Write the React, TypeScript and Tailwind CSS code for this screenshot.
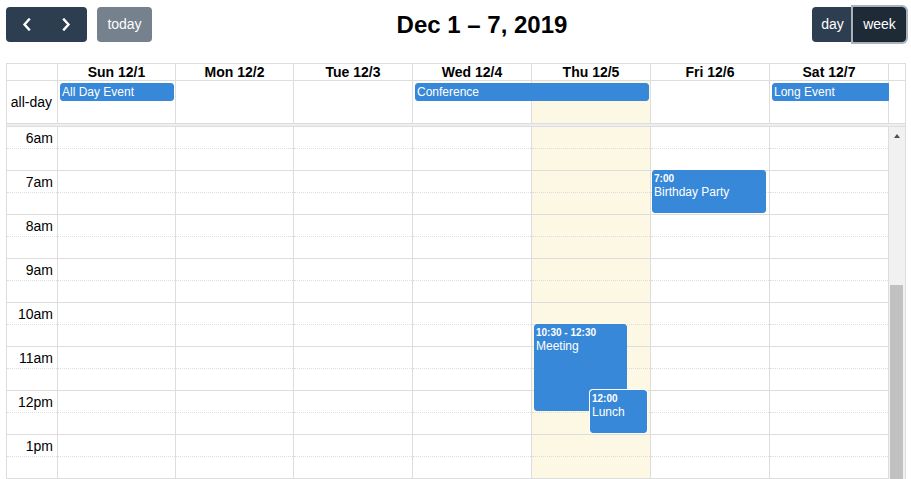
import React from 'react';

const days = ['Sun 12/1', 'Mon 12/2', 'Tue 12/3', 'Wed 12/4', 'Thu 12/5', 'Fri 12/6', 'Sat 12/7'];
const TODAY = 4;
const hours = ['6am', '7am', '8am', '9am', '10am', '11am', '12pm', '1pm'];
const colStart = ['col-start-2', 'col-start-3', 'col-start-4', 'col-start-5', 'col-start-6', 'col-start-7', 'col-start-8'];

const HOUR = 44;

const timed = [
  { day: 5, start: 7, end: 8, time: '7:00', title: 'Birthday Party', left: 1, right: 3, outline: false },
  { day: 4, start: 10.5, end: 12.5, time: '10:30 - 12:30', title: 'Meeting', left: 2, right: 23, outline: false },
  { day: 4, start: 12, end: 13, time: '12:00', title: 'Lunch', left: 58, right: 3, outline: true },
];

// axis | 7 days | scrollbar gutter
const grid = 'grid grid-cols-[51px_118px_118px_119px_119px_119px_119px_119px_17px]';

function Chevron({ dir }: { dir: 'left' | 'right' }) {
  return (
    <svg width="9" height="13" viewBox="0 0 9 13" fill="none">
      <path
        d={dir === 'left' ? 'M7 1.5L2.5 6.5L7 11.5' : 'M2 1.5L6.5 6.5L2 11.5'}
        stroke="white"
        strokeWidth="2.4"
        strokeLinecap="square"
      />
    </svg>
  );
}

function Toolbar() {
  return (
    <div className="flex items-center justify-between h-[35px] mb-[21px]">
      <div className="flex items-center">
        <div className="flex">
          <button className="w-[40px] h-[35px] flex items-center justify-center bg-[#2c3e50] rounded-l-[4px]">
            <Chevron dir="left" />
          </button>
          <button className="w-[41px] h-[35px] flex items-center justify-center bg-[#2c3e50] rounded-r-[4px]">
            <Chevron dir="right" />
          </button>
        </div>
        <button className="ml-[10px] h-[35px] w-[55px] rounded-[4px] bg-[#2c3e50] opacity-65 text-white text-[14px]">
          today
        </button>
      </div>
      <h2 className="text-[24px] font-bold leading-[35px] text-black">Dec 1 – 7, 2019</h2>
      <div className="flex">
        <button className="h-[35px] w-[41px] bg-[#2c3e50] rounded-l-[4px] text-white text-[14px]">day</button>
        <button className="relative z-10 h-[35px] w-[53px] bg-[#1e2b37] border border-[#1a252f] rounded-r-[4px] text-white text-[14px] ring-2 ring-[#aab2ba]">
          week
        </button>
      </div>
    </div>
  );
}

function Header() {
  return (
    <div className={`${grid} h-[17px]`}>
      <div className="border-r border-b border-[#ddd]" />
      {days.map((d) => (
        <div key={d} className="border-r border-b border-[#ddd] text-center text-[14px] font-bold leading-[16px] text-black">
          {d}
        </div>
      ))}
      <div className="border-r border-b border-[#ddd]" />
    </div>
  );
}

function AllDay() {
  const ev = 'row-start-1 self-start mt-[2px] h-[18px] bg-[#3788d8] border border-[#3788d8] text-white text-[12px] leading-[16px] px-[1px] whitespace-nowrap overflow-hidden relative z-10';
  return (
    <div className={`${grid} grid-rows-[43px]`}>
      <div className="row-start-1 col-start-1 border-r border-b border-[#ddd] flex items-center justify-end pr-[5px] text-[14px] text-black">
        all-day
      </div>
      {days.map((d, i) => (
        <div
          key={d}
          className={`row-start-1 ${colStart[i]} border-r border-b border-[#ddd] ${i === TODAY ? 'bg-[#fcf8e3]' : ''}`}
        />
      ))}
      <div className="row-start-1 col-start-9 border-r border-b border-[#ddd]" />
      <div className={`${ev} col-start-2 mx-[2px] rounded-[3px]`}>All Day Event</div>
      <div className={`${ev} col-start-5 col-span-2 mx-[2px] rounded-[3px]`}>Conference</div>
      <div className={`${ev} col-start-8 ml-[2px] rounded-l-[3px]`}>Long Event</div>
    </div>
  );
}

function Slots({ labels }: { labels?: boolean }) {
  return (
    <>
      {Array.from({ length: 16 }).map((_, i) => (
        <div
          key={i}
          className={`h-[22px] border-b border-[#ddd] ${i % 2 === 0 ? 'border-dotted' : 'border-solid'} ${
            labels ? 'flex items-center justify-end pr-[4px] text-[14px] leading-[16px] text-black' : ''
          }`}
        >
          {labels && i % 2 === 0 ? hours[i / 2] : null}
        </div>
      ))}
    </>
  );
}

function Body() {
  return (
    <div className={`${grid} h-[352px] overflow-hidden`}>
      <div className="border-r border-[#ddd] flex flex-col">
        <Slots labels />
      </div>
      {days.map((d, i) => (
        <div key={d} className={`relative border-r border-[#ddd] flex flex-col ${i === TODAY ? 'bg-[#fcf8e3]' : ''}`}>
          <Slots />
          {timed
            .filter((e) => e.day === i)
            .map((e) => (
              <div
                key={e.title}
                className={`absolute bg-[#3788d8] border border-[#3788d8] rounded-[3px] text-white px-[1px] pt-[1px] overflow-hidden ${
                  e.outline ? 'ring-1 ring-white' : ''
                }`}
                style={{
                  top: (e.start - 6) * HOUR - 1,
                  height: (e.end - e.start) * HOUR - 1,
                  left: e.left,
                  right: e.right,
                }}
              >
                <div className="text-[10px] font-bold leading-[13px] whitespace-nowrap">{e.time}</div>
                <div className="text-[12px] leading-[15px]">{e.title}</div>
              </div>
            ))}
        </div>
      ))}
      <div className="relative border-r border-[#ddd] bg-[#f1f1f1]">
        <div className="flex justify-center pt-[7px]">
          <div className="w-0 h-0 border-l-[3px] border-r-[3px] border-b-[4px] border-l-transparent border-r-transparent border-b-[#505050]" />
        </div>
        <div className="absolute left-[1px] w-[13px] top-[158px] bottom-0 bg-[#c1c1c1]" />
      </div>
    </div>
  );
}

export default function App() {
  return (
    <div className="w-[911px] h-[479px] overflow-hidden bg-white font-['Liberation_Sans',Arial,sans-serif]">
      <div className="w-[900px] ml-[6px] pt-[7px]">
        <Toolbar />
        <div className="border-l border-t border-[#ddd]">
          <Header />
          <AllDay />
          <div className="h-[3px] bg-[#eee] border-b border-r border-[#ddd]" />
          <Body />
        </div>
      </div>
    </div>
  );
}
